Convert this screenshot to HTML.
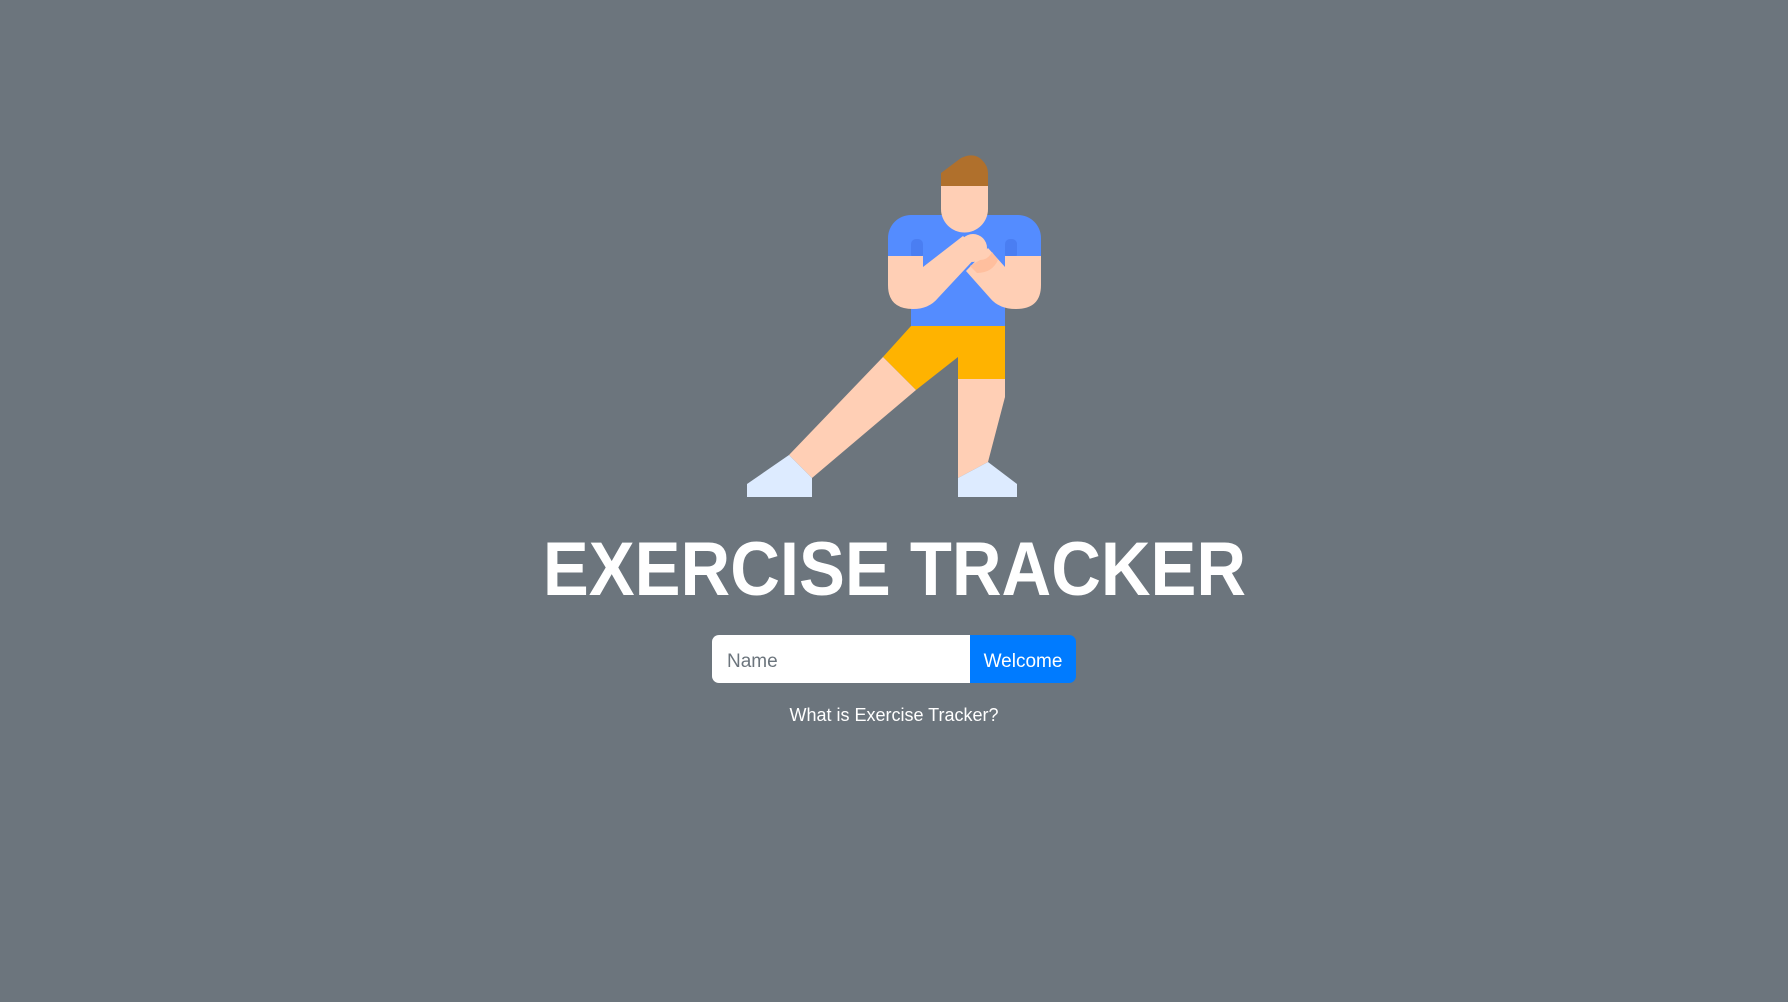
<!DOCTYPE html>
<html><head><meta charset="utf-8"><style>
html,body{margin:0;padding:0;}
body{width:1788px;height:1002px;background:#6c757d;position:relative;overflow:hidden;font-family:"Liberation Sans",sans-serif;}
svg{position:absolute;left:730px;top:140px;}
h1{position:absolute;left:0;width:1788px;top:526px;margin:0;text-align:center;color:#fff;font-weight:bold;font-size:76px;line-height:88px;}
h1 span{display:inline-block;transform:scaleX(0.905);}
.inp{position:absolute;left:712px;top:635px;width:258px;height:48px;background:#fff;border-radius:7px 0 0 7px;}
.inp span{position:absolute;left:15px;top:16px;font-size:19px;color:#6c757d;}
.btn{position:absolute;left:970px;top:635px;width:106px;height:48px;background:#007bff;border-radius:0 7px 7px 0;color:#fff;font-size:19px;text-align:center;line-height:54px;}
.lnk{position:absolute;left:0;width:1788px;top:705px;text-align:center;color:#fff;font-size:18px;}
</style></head><body>
<svg width="340" height="370" viewBox="0 0 340 370">
<path d="M211,33 L231,18 Q244,12 252,20 Q258,26 258,33 V46 H211 Z" fill="#b0702c"/>
<path d="M158,98 A23,23 0 0 1 181,75 H288 A23,23 0 0 1 311,98 V116 H158 Z" fill="#548cff"/>
<rect x="181" y="75" width="94" height="111" fill="#548cff"/>
<rect x="181" y="99" width="12" height="20" rx="5" fill="#4a7ef2"/>
<rect x="275" y="99" width="12" height="20" rx="5" fill="#4a7ef2"/>
<path d="M211,46 H258 V69 A23.5,23.5 0 0 1 211,69 Z" fill="#ffcfb5"/>
<path d="M158,116 H193 V127 L233,96 L250,113 L208,158 Q199,169 183,169 Q158,169 158,145 Z" fill="#ffcfb5"/>
<path d="M311,116 H275 V127 L258,108 L236,131 L260,158 Q269,169 286,169 Q311,169 311,145 Z" fill="#ffcfb5"/>
<path d="M240,126 L250,120 Q258,120 262,112 L268,120 Q262,133 247,133 Z" fill="#ffbf9e"/>
<circle cx="243" cy="108" r="14" fill="#ffcfb5"/>
<path d="M181,186 H275 V239 H228 V217 L186,250 L153,217 Z" fill="#ffb300"/>
<path d="M153,217 L186,250 L82,338 L59,315 Z" fill="#ffcfb5"/>
<path d="M228,239 H275 V257 L258,322 L228,338 Z" fill="#ffcfb5"/>
<path d="M17,344 L59,315 L82,338 V357 H17 Z" fill="#ddebff"/>
<path d="M228,338 L258,322 L287,344 V357 H228 Z" fill="#ddebff"/>
</svg>
<h1><span>EXERCISE TRACKER</span></h1>
<div class="inp"><span>Name</span></div>
<div class="btn">Welcome</div>
<div class="lnk">What is Exercise Tracker?</div>
</body></html>
